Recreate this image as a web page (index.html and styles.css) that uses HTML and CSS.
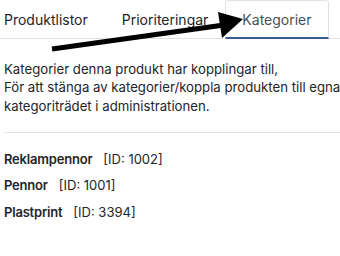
FILE: index.html
```html
<!DOCTYPE html>
<html lang="sv">
<head>
<meta charset="utf-8">
<link rel="stylesheet" href="styles.css">
</head>
<body>
<div class="page">
  <nav class="tabs">
    <span class="tab">Produktlistor</span>
    <span class="tab">Prioriteringar</span>
    <span class="tab active">Kategorier</span>
  </nav>
  <div class="content">
    <p class="intro">Kategorier denna produkt har kopplingar till,<br>För att stänga av kategorier/koppla produkten till egna kategorier gå till<br>kategoriträdet i administrationen.</p>
    <hr class="divider">
    <ul class="cats">
      <li><strong>Reklampennor</strong><span class="id">[ID: 1002]</span></li>
      <li><strong>Pennor</strong><span class="id">[ID: 1001]</span></li>
      <li><strong>Plastprint</strong><span class="id">[ID: 3394]</span></li>
    </ul>
  </div>
  <svg class="arrow" width="340" height="60" viewBox="0 0 340 60">
    <line x1="52" y1="49" x2="224" y2="25" stroke="#000" stroke-width="5"/>
    <polygon points="218,12 243,19 222,38" fill="#000"/>
  </svg>
</div>
</body>
</html>
```

FILE: styles.css
```css
html, body {
  margin: 0;
  padding: 0;
  background: #fff;
  overflow: hidden;
}
body {
  font-family: Inter, "Liberation Sans", sans-serif;
  color: #212529;
  width: 340px;
  height: 256px;
}
.page {
  position: relative;
  width: 340px;
  height: 256px;
  overflow: hidden;
}
.tabs {
  display: flex;
  margin-left: -13px;
  width: 420px;
  border-bottom: 1px solid #dee2e6;
}
.tab {
  font-size: 14px;
  line-height: 21px;
  padding: 8px 16px;
  border: 1px solid transparent;
  margin-bottom: -1px;
  white-space: nowrap;
  color: #212529;
}
.tab.active {
  color: #495057;
  border-color: #dee2e6 #dee2e6 #3b5b94;
  border-bottom-width: 2px;
  padding-bottom: 7px;
  border-radius: 4px 4px 0 0;
}
.content {
  padding-left: 4px;
  width: 500px;
}
.intro {
  margin: 21px 0 0;
  font-size: 13.2px;
  line-height: 18.3px;
  white-space: nowrap;
}
.divider {
  margin: 17px 0 0;
  border: 0;
  border-top: 1px solid #e6e6e6;
  height: 0;
}
.cats {
  list-style: none;
  margin: 13px 0 0;
  padding: 0;
  font-size: 13px;
  line-height: 26.5px;
}
.cats strong {
  font-weight: 600;
  letter-spacing: -0.2px;
}
.id {
  margin-left: 11px;
}
.arrow {
  position: absolute;
  left: 0;
  top: 0;
}
```
